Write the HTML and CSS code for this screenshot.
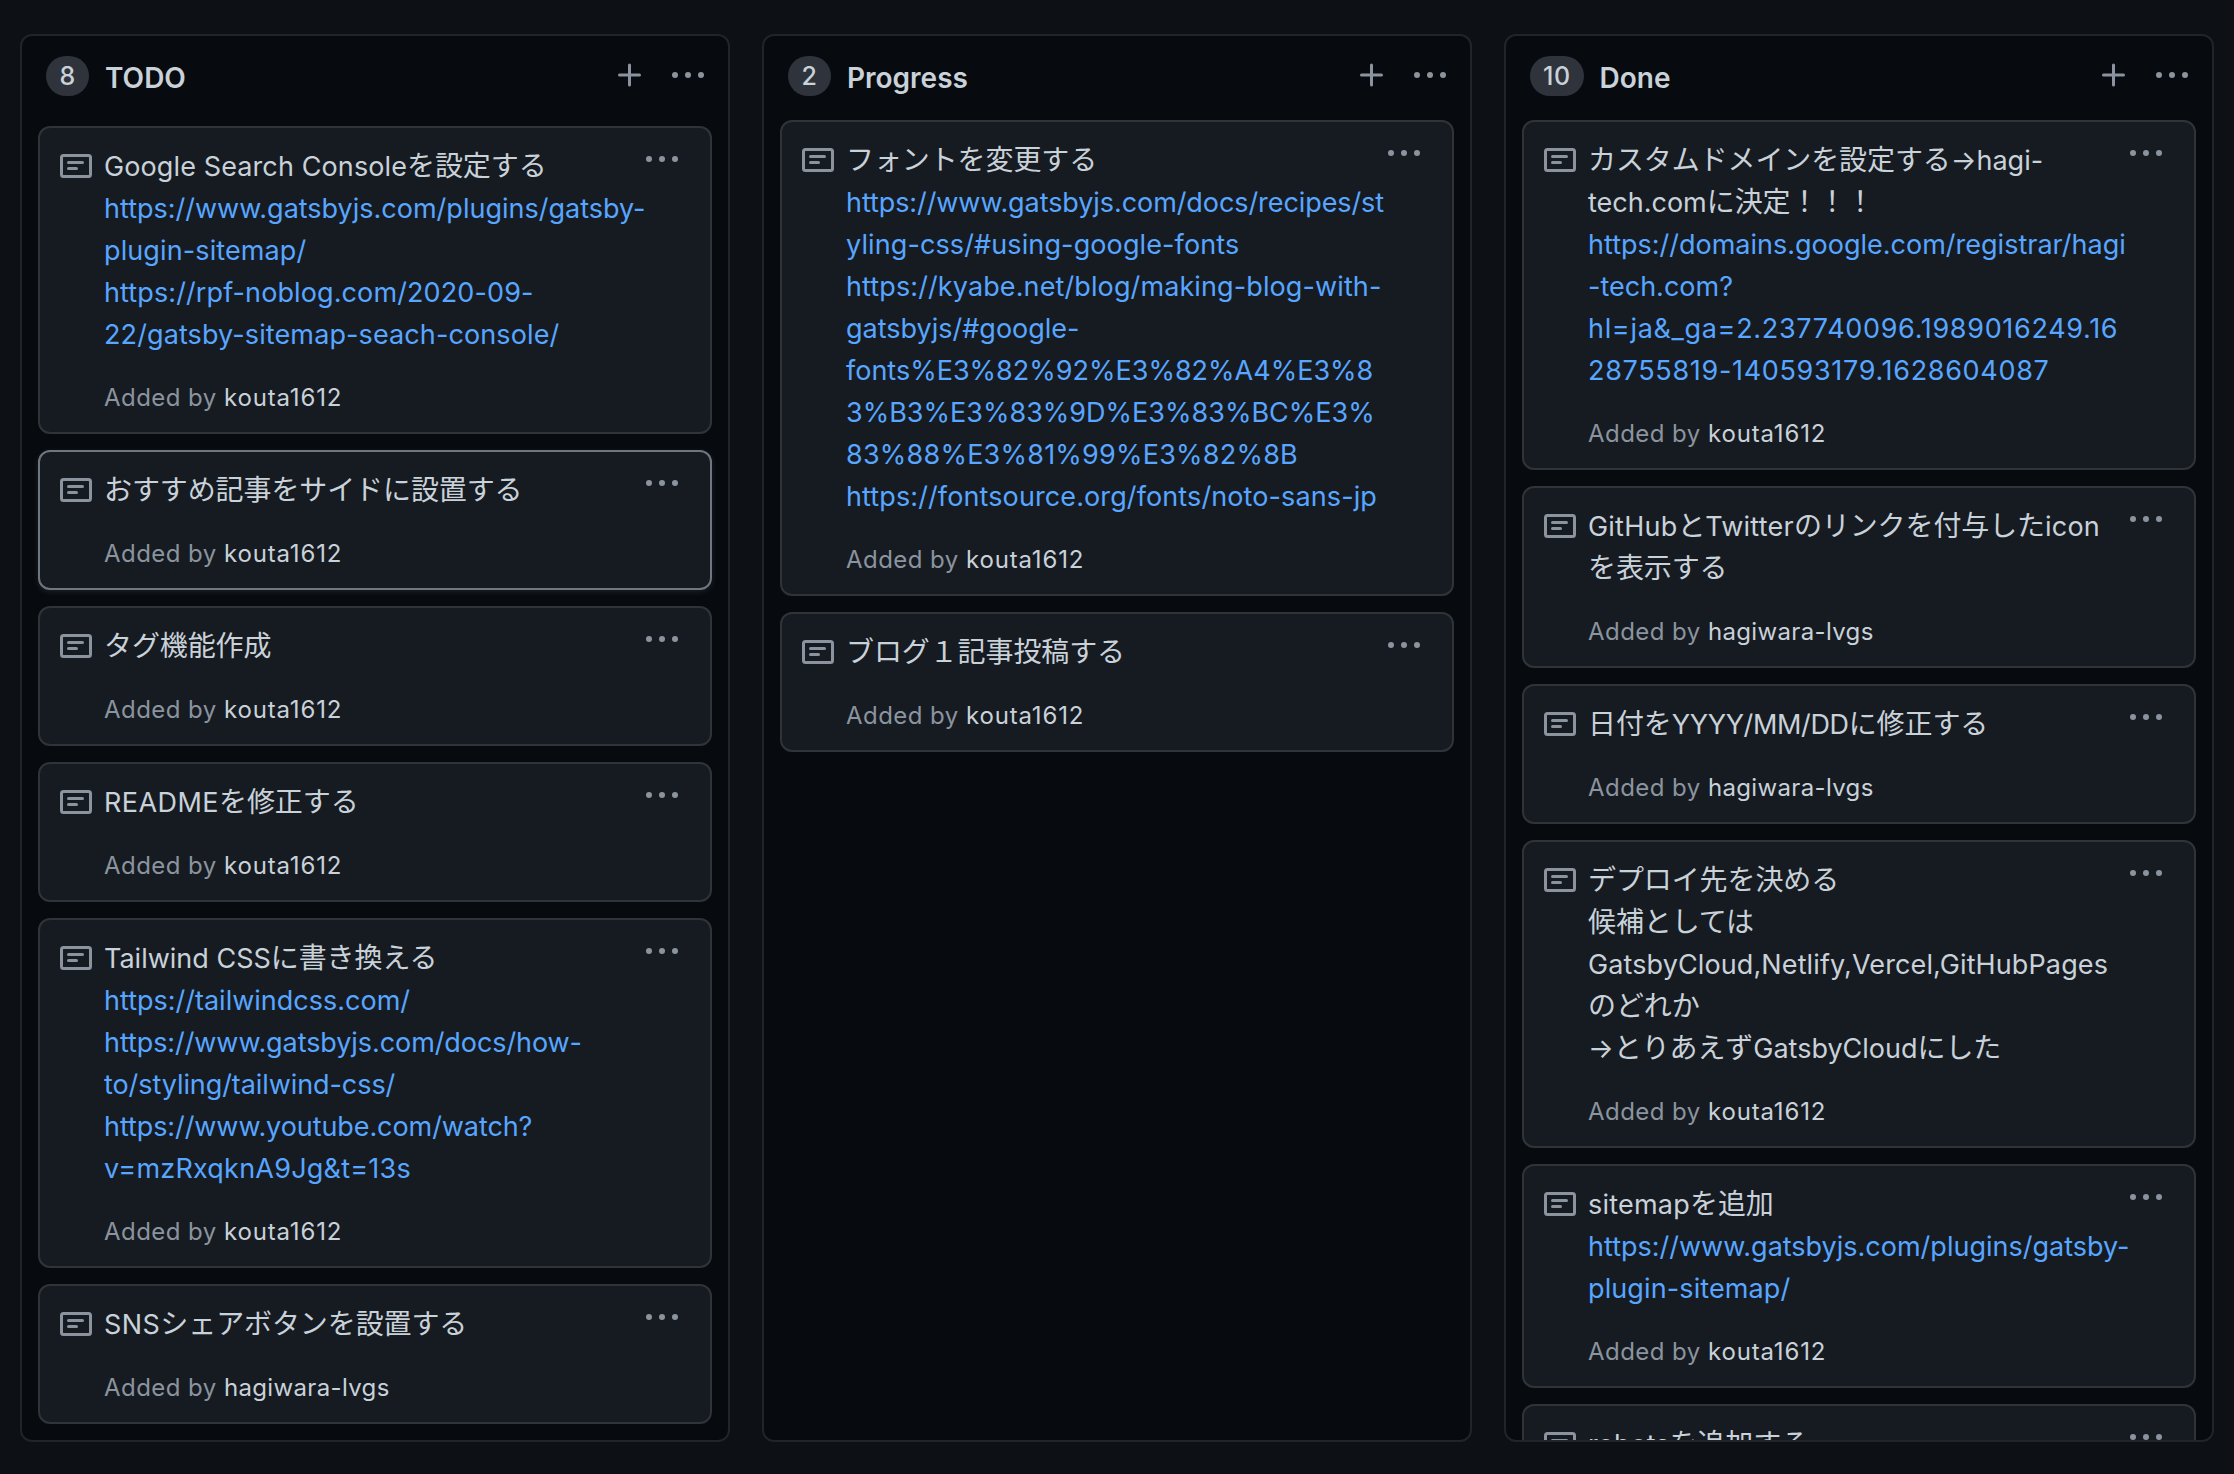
FILE: index.html
```html
<!DOCTYPE html>
<html lang="ja">
<head>
<meta charset="utf-8">
<title>Project board</title>
<link rel="stylesheet" href="styles.css">
</head>
<body>
<svg class="sprite" aria-hidden="true">
  <symbol id="note" viewBox="0 0 32 24"><rect x="1.5" y="1.5" width="29" height="21" rx="2" fill="none" stroke="currentColor" stroke-width="3"/><path d="M8.5 8.5h14M8.5 14.5h8" fill="none" stroke="currentColor" stroke-width="3" stroke-linecap="round"/></symbol>
  <symbol id="dots" viewBox="0 0 32 6"><circle cx="3" cy="3" r="3"/><circle cx="16" cy="3" r="3"/><circle cx="29" cy="3" r="3"/></symbol>
  <symbol id="plus" viewBox="0 0 24 24"><path d="M11.5 2v20M1.5 12h20" fill="none" stroke="currentColor" stroke-width="3" stroke-linecap="round"/></symbol>
</svg>
<main class="board">
  <section class="column column-todo">
    <header class="column-head"><span class="count">8</span><h2 class="column-title">TODO</h2><svg class="plus"><use href="#plus"/></svg><svg class="dots"><use href="#dots"/></svg></header>
    <div class="cards">
      <article class="card"><svg class="note"><use href="#note"/></svg><div class="body"><p class="text"><span class="loose">Google Search Console</span><span class="ja">を設定する</span><br><a>https://www.gatsbyjs.com/plugins/gatsby-<br><span class="loose">plugin-sitemap/</span></a><br><a class="loose">https://rpf-noblog.com/2020-09-<br>22/gatsby-sitemap-seach-console/</a></p><p class="meta">Added by <a class="user numbered">kouta1612</a></p></div><svg class="dots"><use href="#dots"/></svg></article>
      <article class="card selected"><svg class="note"><use href="#note"/></svg><div class="body"><p class="text"><span class="ja">おすすめ記事をサイドに設置する</span></p><p class="meta">Added by <a class="user numbered">kouta1612</a></p></div><svg class="dots"><use href="#dots"/></svg></article>
      <article class="card"><svg class="note"><use href="#note"/></svg><div class="body"><p class="text"><span class="ja">タグ機能作成</span></p><p class="meta">Added by <a class="user numbered">kouta1612</a></p></div><svg class="dots"><use href="#dots"/></svg></article>
      <article class="card"><svg class="note"><use href="#note"/></svg><div class="body"><p class="text"><span class="caps">README</span><span class="ja">を修正する</span></p><p class="meta">Added by <a class="user numbered">kouta1612</a></p></div><svg class="dots"><use href="#dots"/></svg></article>
      <article class="card"><svg class="note"><use href="#note"/></svg><div class="body"><p class="text">Tailwind CSS<span class="ja">に書き換える</span><br><a>https://tailwindcss.com/</a><br><a class="tight">https://www.gatsbyjs.com/docs/how-<br>to/styling/tailwind-css/</a><br><a class="tight">https://www.youtube.com/watch?<br></a><a class="query">v=mzRxqknA9Jg&amp;t=13s</a></p><p class="meta">Added by <a class="user numbered">kouta1612</a></p></div><svg class="dots"><use href="#dots"/></svg></article>
      <article class="card"><svg class="note"><use href="#note"/></svg><div class="body"><p class="text"><span class="caps">SNS</span><span class="ja">シェアボタンを設置する</span></p><p class="meta">Added by <a class="user">hagiwara-lvgs</a></p></div><svg class="dots"><use href="#dots"/></svg></article>
    </div>
  </section>
  <section class="column">
    <header class="column-head"><span class="count">2</span><h2 class="column-title">Progress</h2><svg class="plus"><use href="#plus"/></svg><svg class="dots"><use href="#dots"/></svg></header>
    <div class="cards">
      <article class="card"><svg class="note"><use href="#note"/></svg><div class="body"><p class="text"><span class="ja">フォントを変更する</span><br><a><span class="tight">https://www.gatsbyjs.com/docs/recipes/st</span><br><span class="loose">yling-css/#using-google-fonts</span></a><br><a><span class="loose">https://kyabe.net/blog/making-blog-with-</span><br>gatsbyjs/#google-<br>fonts%E3%82%92%E3%82%A4%E3%8<br>3%B3%E3%83%9D%E3%83%BC%E3%<br><span class="query">83%88%E3%81%99%E3%82%8B</span></a><br><a class="loose">https://fontsource.org/fonts/noto-sans-jp</a></p><p class="meta">Added by <a class="user numbered">kouta1612</a></p></div><svg class="dots"><use href="#dots"/></svg></article>
      <article class="card"><svg class="note"><use href="#note"/></svg><div class="body"><p class="text"><span class="ja">ブログ１記事投稿する</span></p><p class="meta">Added by <a class="user numbered">kouta1612</a></p></div><svg class="dots"><use href="#dots"/></svg></article>
    </div>
  </section>
  <section class="column">
    <header class="column-head"><span class="count">10</span><h2 class="column-title">Done</h2><svg class="plus"><use href="#plus"/></svg><svg class="dots"><use href="#dots"/></svg></header>
    <div class="cards">
      <article class="card"><svg class="note"><use href="#note"/></svg><div class="body"><p class="text"><span class="ja">カスタムドメインを設定する</span>→hagi-<br>tech.com<span class="ja">に決定！！！</span><br><a>https://domains.google.com/registrar/hagi<br>-tech.com?<br><span class="digits">hl=ja&amp;_ga=2.237740096.1989016249.16<br>28755819-140593179.1628604087</span></a></p><p class="meta">Added by <a class="user numbered">kouta1612</a></p></div><svg class="dots"><use href="#dots"/></svg></article>
      <article class="card"><svg class="note"><use href="#note"/></svg><div class="body"><p class="text"><span class="query">GitHub<span class="ja">と</span>Twitter<span class="ja">のリンクを付与した</span>icon</span><br><span class="ja">を表示する</span></p><p class="meta">Added by <a class="user">hagiwara-lvgs</a></p></div><svg class="dots"><use href="#dots"/></svg></article>
      <article class="card"><svg class="note"><use href="#note"/></svg><div class="body"><p class="text"><span class="ja">日付を</span><span class="date">YYYY/MM/DD</span><span class="ja">に修正する</span></p><p class="meta">Added by <a class="user">hagiwara-lvgs</a></p></div><svg class="dots"><use href="#dots"/></svg></article>
      <article class="card"><svg class="note"><use href="#note"/></svg><div class="body"><p class="text"><span class="ja">デプロイ先を決める</span><br><span class="ja">候補としては</span><br><span class="loose">GatsbyCloud,Netlify,Vercel,GitHubPages</span><br><span class="ja">のどれか</span><br>→<span class="ja">とりあえず</span>GatsbyCloud<span class="ja">にした</span></p><p class="meta">Added by <a class="user numbered">kouta1612</a></p></div><svg class="dots"><use href="#dots"/></svg></article>
      <article class="card"><svg class="note"><use href="#note"/></svg><div class="body"><p class="text"><span class="query">sitemap</span><span class="ja">を追加</span><br><a>https://www.gatsbyjs.com/plugins/gatsby-<br><span class="loose">plugin-sitemap/</span></a></p><p class="meta">Added by <a class="user numbered">kouta1612</a></p></div><svg class="dots"><use href="#dots"/></svg></article>
      <article class="card"><svg class="note"><use href="#note"/></svg><div class="body"><p class="text">robots<span class="ja">を追加する</span></p></div><svg class="dots"><use href="#dots"/></svg></article>
    </div>
  </section>
</main>
</body>
</html>
```
FILE: styles.css
```css
* { box-sizing: border-box; }
body { margin: 0; background: #0d1015; color: #c9d1d9; font-family: Inter, "Noto Sans CJK JP", sans-serif; font-size: 27px; line-height: 42px; }
h2, p { margin: 0; }
svg { display: block; flex: none; color: #8b949e; fill: currentColor; }
.sprite { position: absolute; width: 0; height: 0; }
.board { display: flex; gap: 32px; height: 1474px; padding: 34px 20px 32px; overflow: hidden; }
.column { display: flex; flex-direction: column; flex: none; width: 710px; overflow: hidden; background: #070a0e; border: 2px solid #212429; border-radius: 12px; }
.column-head { display: flex; align-items: flex-start; flex: none; height: 84px; padding: 20px 24px 0; }
.column-todo .column-head { height: 90px; }
.count { height: 40px; min-width: 43px; padding: 0 13px; border-radius: 20px; background: #2f333b; font-size: 25px; font-weight: 500; line-height: 40px; text-align: center; letter-spacing: 0.5px; }
.column-title { flex: 1; margin: 1px 0 0 16px; font-size: 28px; font-weight: 600; line-height: 42px; }
.plus { width: 24px; height: 24px; margin-top: 7px; }
.dots { width: 32px; height: 6px; }
.column-head .dots { margin: 16px 0 0 30px; }
.cards { display: flex; flex-direction: column; gap: 16px; padding: 0 16px; }
.card { display: flex; flex: none; align-items: flex-start; padding: 18px 18px 16px 20px; background: #161b22; border: 2px solid #303439; border-radius: 12px; }
.selected { border-color: #6e7681; box-shadow: 0 2px 6px rgba(110, 118, 129, 0.2); }
.note { width: 32px; height: 24px; margin-top: 8px; }
.body { flex: 1; min-width: 0; margin-left: 12px; }
.text { white-space: nowrap; }
.text a { color: #58a6ff; }
.ja { font-size: 28px; line-height: 1; letter-spacing: -0.1px; }
.loose { letter-spacing: 0.11px; }
.tight { letter-spacing: -0.08px; }
.query { letter-spacing: 0.22px; }
.caps { letter-spacing: 0.45px; }
.digits { letter-spacing: 0.68px; }
.date { letter-spacing: -0.35px; }
.card .dots { margin: 10px 14px 0 0; }
.meta { margin-top: 24px; color: #8b949e; font-size: 24px; line-height: 36px; letter-spacing: 0.45px; }
.user { color: #c9d1d9; letter-spacing: 0.35px; }
.numbered { letter-spacing: 0.85px; }
```
